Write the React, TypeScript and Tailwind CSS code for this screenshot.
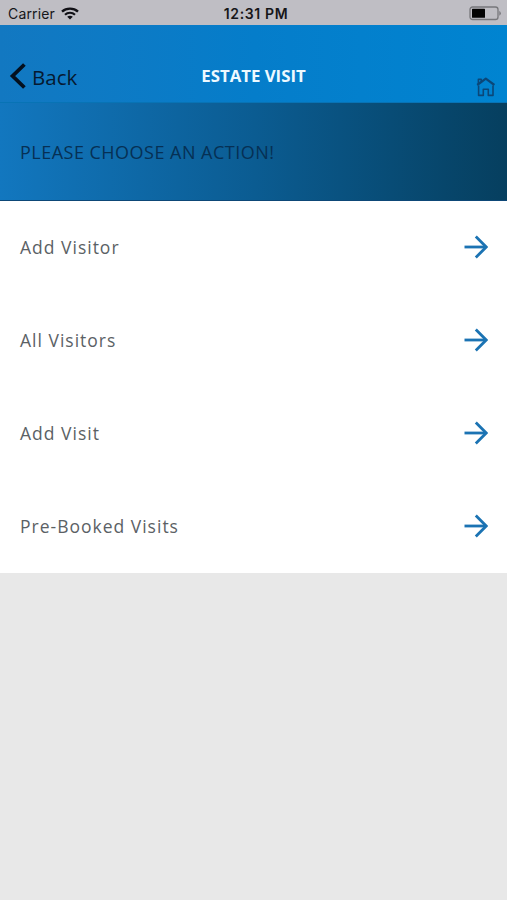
const actions = ['Add Visitor', 'All Visitors', 'Add Visit', 'Pre-Booked Visits'];

function WifiIcon() {
  return (
    <svg width="18" height="13" viewBox="0 0 18 13" fill="none" stroke="#111116" className="ml-[6px] shrink-0">
      <path d="M1 4.6C5.4 0.6 12.6 0.6 17 4.6" strokeWidth="2.4" />
      <path d="M4 7.7C6.8 5.1 11.2 5.1 14 7.7" strokeWidth="2.2" />
      <path d="M6.2 9.8C7.8 8.5 10.2 8.5 11.8 9.8L9 12.6Z" fill="#111116" stroke="none" />
    </svg>
  );
}

function BatteryIcon() {
  return (
    <svg width="33" height="15" viewBox="0 0 33 15">
      <rect x="1" y="1" width="28" height="12.5" rx="2.6" fill="none" stroke="#77777b" strokeWidth="1.3" />
      <rect x="3" y="2.8" width="13" height="9" rx="0.6" fill="#030303" />
      <path d="M30.3 4.8Q31.8 5.8 31.8 7.3Q31.8 8.8 30.3 9.8Z" fill="#77777b" />
    </svg>
  );
}

function HomeIcon() {
  return (
    <svg width="20" height="20" viewBox="0 0 20 20" fill="none" stroke="#0b4778" strokeWidth="1.6" strokeLinejoin="round">
      <path d="M2.6 8.4V18.4H7.3V12.3H12.3V18.4H17V8.4" />
      <path d="M1.2 8L9.8 1.6L18.4 8" strokeWidth="2.2" />
      <path d="M2.4 6.8V2.2H5.2V4.6" />
    </svg>
  );
}

function ArrowIcon() {
  return (
    <svg width="24" height="24" viewBox="0 0 24 24" fill="none" stroke="#1b73b3" strokeWidth="2.8">
      <path d="M0.5 12H22" />
      <path d="M11.8 1.5L22.2 12L11.8 22.5" />
    </svg>
  );
}

export default function App() {
  return (
    <div className="flex h-[900px] w-[507px] flex-col overflow-hidden bg-[#e8e8e8] font-['Open_Sans','Noto_Sans',sans-serif]">
      <div className="grid h-[25px] shrink-0 grid-cols-[1fr_auto_1fr] items-center bg-[#bfbec4] font-['Inter',sans-serif] text-[#161619]">
        <div className="flex items-center pl-2 pt-[2px]">
          <span className="text-[14px] leading-5 tracking-[0.15px]">Carrier</span>
          <WifiIcon />
        </div>
        <span className="pl-[5px] pt-[2px] text-[14px] font-semibold leading-5 tracking-[0.65px]">12:31 PM</span>
        <div className="flex justify-end pr-[5px] pt-[1px]">
          <BatteryIcon />
        </div>
      </div>

      <header className="grid h-[78px] shrink-0 grid-cols-[1fr_auto_1fr] border-b border-[#0873b5] bg-linear-to-r from-[#1278c1] via-[#057dca] to-[#0084d1] pt-[35px]">
        <button className="flex h-[34px] items-center pl-[9px] text-[20.5px] leading-8 text-[#061a31]">
          <svg width="17" height="26" viewBox="0 0 17 26" fill="none" stroke="#04101e" strokeWidth="3.8" className="mr-[6px] -mt-[3px]">
            <path d="M15.4 1.5L3.6 13L15.4 24.5" />
          </svg>
          Back
        </button>
        <h1 className="text-[16.8px] font-bold leading-8 text-[#edf9ff]">ESTATE VISIT</h1>
        <button className="flex justify-end pr-[11px] pt-[17px]" aria-label="Home">
          <HomeIcon />
        </button>
      </header>

      <section className="flex h-[98px] shrink-0 items-center border-b border-[#0d4777] bg-linear-to-r from-[#1277bf] via-[#0b5c92] to-[#063f5f] pl-5">
        <h2 className="text-[18px] leading-6 tracking-[0.48px] text-[#063054]">PLEASE CHOOSE AN ACTION!</h2>
      </section>

      <main className="shrink-0 bg-white">
        {actions.map((label) => (
          <button key={label} className="flex h-[93px] w-full items-center justify-between pb-[1px] pl-5 pr-[19px] text-left">
            <span className="text-[17.5px] leading-6 tracking-[1px] text-[#5b6165]">{label}</span>
            <ArrowIcon />
          </button>
        ))}
      </main>
    </div>
  );
}
